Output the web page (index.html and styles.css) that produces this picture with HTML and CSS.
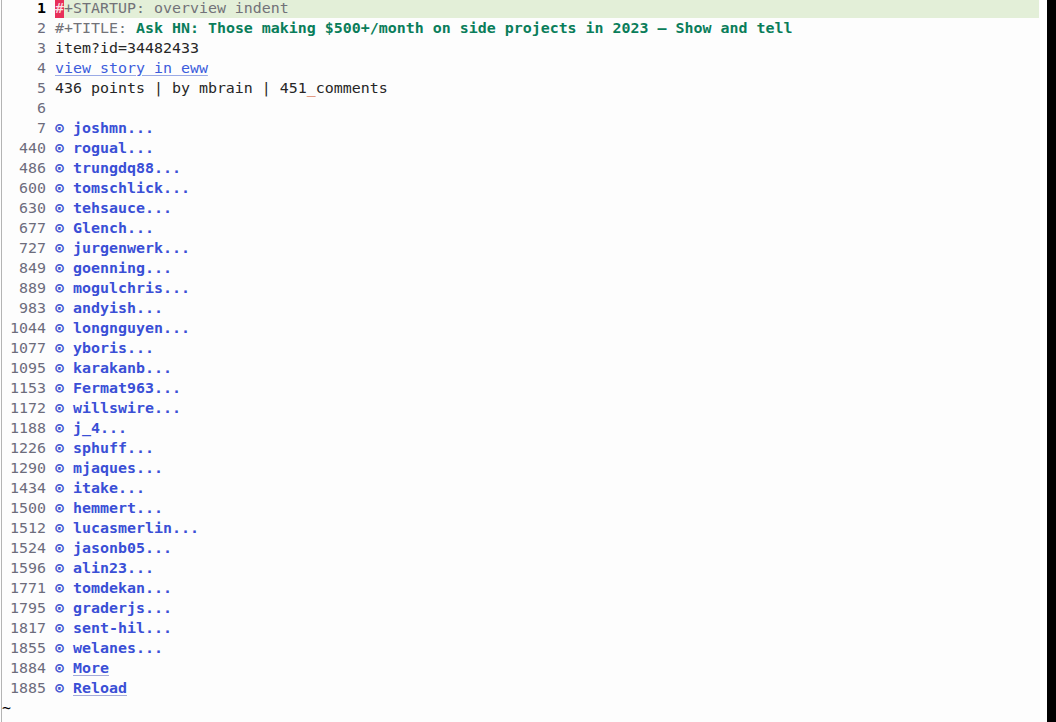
FILE: index.html
```html
<!DOCTYPE html>
<html>
<head>
<meta charset="utf-8">
<link rel="stylesheet" href="styles.css">
</head>
<body>
<div class="frame">
  <div class="editor">
    <div class="lines">
      <div class="row current"><span class="num">1</span><span class="text hl"><span class="cursor">#</span><span class="meta">+STARTUP: overview indent</span></span></div>
      <div class="row"><span class="num">2</span><span class="text"><span class="meta">#+TITLE: </span><span class="title">Ask HN: Those making $500+/month on side projects in 2023 – Show and tell</span></span></div>
      <div class="row"><span class="num">3</span><span class="text plain">item?id=34482433</span></div>
      <div class="row"><span class="num">4</span><span class="text"><span class="link">view story in eww</span></span></div>
      <div class="row"><span class="num">5</span><span class="text plain">436 points | by mbrain | 451<span class="sub">_</span>comments</span></div>
      <div class="row"><span class="num">6</span><span class="text"></span></div>
      <div class="row"><span class="num">7</span><span class="text"><span class="bullet">⊙</span> <span class="head">joshmn...</span></span></div>
      <div class="row"><span class="num">440</span><span class="text"><span class="bullet">⊙</span> <span class="head">rogual...</span></span></div>
      <div class="row"><span class="num">486</span><span class="text"><span class="bullet">⊙</span> <span class="head">trungdq88...</span></span></div>
      <div class="row"><span class="num">600</span><span class="text"><span class="bullet">⊙</span> <span class="head">tomschlick...</span></span></div>
      <div class="row"><span class="num">630</span><span class="text"><span class="bullet">⊙</span> <span class="head">tehsauce...</span></span></div>
      <div class="row"><span class="num">677</span><span class="text"><span class="bullet">⊙</span> <span class="head">Glench...</span></span></div>
      <div class="row"><span class="num">727</span><span class="text"><span class="bullet">⊙</span> <span class="head">jurgenwerk...</span></span></div>
      <div class="row"><span class="num">849</span><span class="text"><span class="bullet">⊙</span> <span class="head">goenning...</span></span></div>
      <div class="row"><span class="num">889</span><span class="text"><span class="bullet">⊙</span> <span class="head">mogulchris...</span></span></div>
      <div class="row"><span class="num">983</span><span class="text"><span class="bullet">⊙</span> <span class="head">andyish...</span></span></div>
      <div class="row"><span class="num">1044</span><span class="text"><span class="bullet">⊙</span> <span class="head">longnguyen...</span></span></div>
      <div class="row"><span class="num">1077</span><span class="text"><span class="bullet">⊙</span> <span class="head">yboris...</span></span></div>
      <div class="row"><span class="num">1095</span><span class="text"><span class="bullet">⊙</span> <span class="head">karakanb...</span></span></div>
      <div class="row"><span class="num">1153</span><span class="text"><span class="bullet">⊙</span> <span class="head">Fermat963...</span></span></div>
      <div class="row"><span class="num">1172</span><span class="text"><span class="bullet">⊙</span> <span class="head">willswire...</span></span></div>
      <div class="row"><span class="num">1188</span><span class="text"><span class="bullet">⊙</span> <span class="head">j_4...</span></span></div>
      <div class="row"><span class="num">1226</span><span class="text"><span class="bullet">⊙</span> <span class="head">sphuff...</span></span></div>
      <div class="row"><span class="num">1290</span><span class="text"><span class="bullet">⊙</span> <span class="head">mjaques...</span></span></div>
      <div class="row"><span class="num">1434</span><span class="text"><span class="bullet">⊙</span> <span class="head">itake...</span></span></div>
      <div class="row"><span class="num">1500</span><span class="text"><span class="bullet">⊙</span> <span class="head">hemmert...</span></span></div>
      <div class="row"><span class="num">1512</span><span class="text"><span class="bullet">⊙</span> <span class="head">lucasmerlin...</span></span></div>
      <div class="row"><span class="num">1524</span><span class="text"><span class="bullet">⊙</span> <span class="head">jasonb05...</span></span></div>
      <div class="row"><span class="num">1596</span><span class="text"><span class="bullet">⊙</span> <span class="head">alin23...</span></span></div>
      <div class="row"><span class="num">1771</span><span class="text"><span class="bullet">⊙</span> <span class="head">tomdekan...</span></span></div>
      <div class="row"><span class="num">1795</span><span class="text"><span class="bullet">⊙</span> <span class="head">graderjs...</span></span></div>
      <div class="row"><span class="num">1817</span><span class="text"><span class="bullet">⊙</span> <span class="head">sent-hil...</span></span></div>
      <div class="row"><span class="num">1855</span><span class="text"><span class="bullet">⊙</span> <span class="head">welanes...</span></span></div>
      <div class="row"><span class="num">1884</span><span class="text"><span class="bullet">⊙</span> <span class="head hlink">More</span></span></div>
      <div class="row"><span class="num">1885</span><span class="text"><span class="bullet">⊙</span> <span class="head hlink">Reload</span></span></div>
      <div class="row"><span class="tilde">~</span></div>
    </div>
  </div>
  <div class="scrollbar"></div>
</div>
</body>
</html>
```

FILE: styles.css
```css
html, body {
  margin: 0;
  padding: 0;
  height: 100%;
  overflow: hidden;
  background: #fdfdfd;
}

.frame {
  display: flex;
  height: 722px;
  font-family: "DejaVu Sans Mono", "Liberation Mono", monospace;
  font-size: 14.95px;
  line-height: 20px;
  color: #262626;
}

.editor {
  flex: 1;
  margin-left: 1px;
  border-left: 1px solid #b4b4b4;
  overflow: hidden;
}

.lines {
  margin-top: -2px;
  display: flex;
  flex-direction: column;
}

.row {
  display: flex;
  height: 20px;
  white-space: pre;
}

.num {
  width: 44px;
  padding-right: 9px;
  text-align: right;
  color: #6c6c7c;
  flex-shrink: 0;
}

.current .num {
  color: #000;
  font-weight: bold;
}

.text {
  flex: 1;
  margin-right: 8px;
}

.text.hl {
  background: #e3efd8;
}

.cursor {
  display: inline-block;
  background: #e8305a;
  color: #fbe0e6;
}

.meta {
  color: #727278;
}

.title {
  color: #0a7d5a;
  font-weight: bold;
}

.plain {
  color: #262626;
}

.link {
  color: #3c5cdc;
  text-decoration: underline;
  text-decoration-color: #9aaae6;
  text-underline-offset: 2px;
}

.sub {
  color: #d0501a;
}

.bullet {
  display: inline-block;
  width: 9px;
  text-align: center;
  color: #4356d2;
  font-weight: bold;
}

.head {
  color: #3a4fd6;
  font-weight: bold;
}

.hlink {
  text-decoration: underline;
  text-decoration-color: #a4acd8;
  text-underline-offset: 2px;
}

.tilde {
  color: #000;
}

.scrollbar {
  width: 9px;
  background: #000;
  flex-shrink: 0;
}
```
